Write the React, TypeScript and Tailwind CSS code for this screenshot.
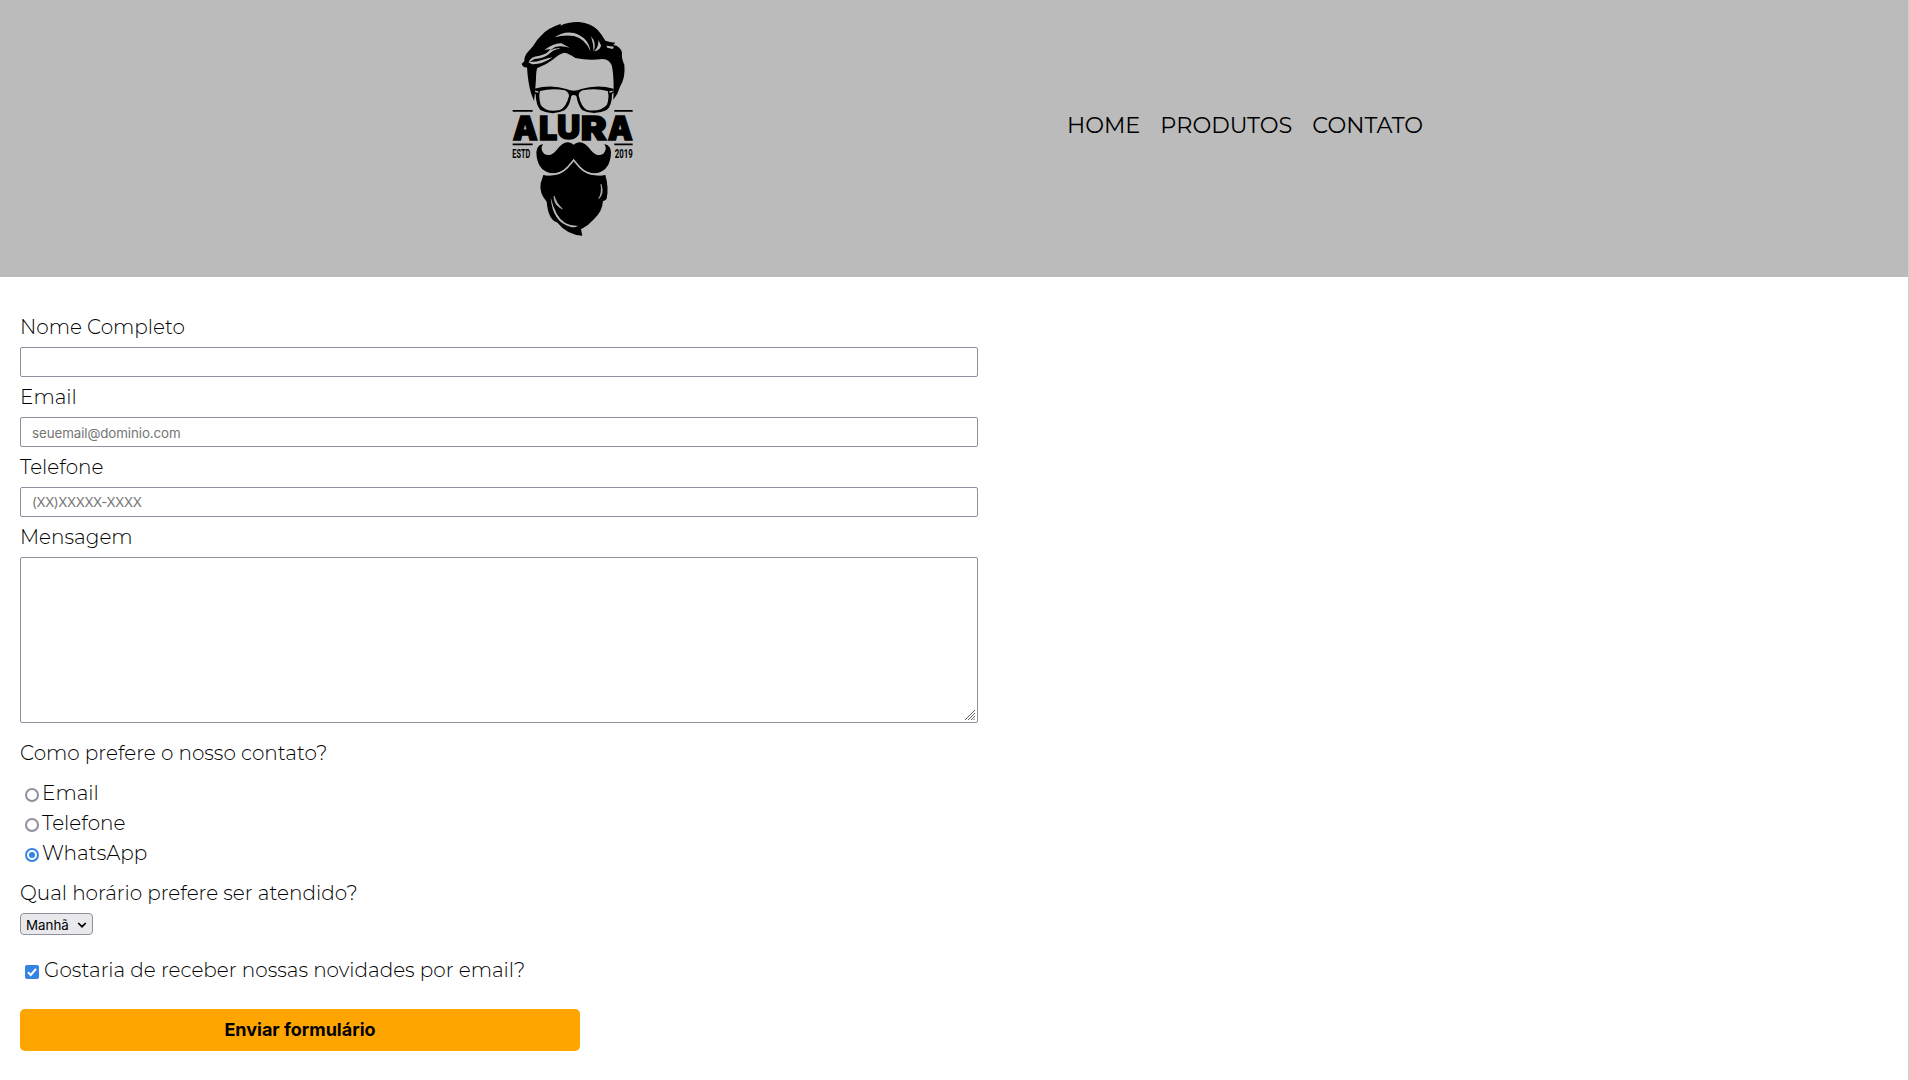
import type { ReactNode } from 'react';

const NAV = ['Home', 'Produtos', 'Contato'];

function Logo() {
  return (
    <svg viewBox="0 0 435 705" className="h-[235px] w-[145px]" role="img" aria-label="Alura">
      {/* hair */}
      <path d="M102 273L94 252Q84 222 81 172Q69 174 65 161L73 154Q72 138 86 123L99 109Q110 88 126 74Q144 54 183 41L181 47Q205 35 237 36Q275 40 294 61Q307 76 316 92Q329 97 346 98L340 105Q361 108 366 128Q364 145 373 164Q377 202 360 230Q354 252 340 269L341 238Q341 190 335 166Q328 148 308 147Q266 153 226 144Q207 130 193 128Q179 130 160 148Q139 165 112 174Q108 183 108 206L105 248Z" />
      <g fill="#bbb">
        <path d="M164 82Q192 62 222 69Q267 83 271 124Q257 87 222 78Q193 73 164 82Z" />
        <path d="M273 79Q291 99 281 125Q281 102 273 79Z" />
        <path d="M295 90Q297 112 282 124Q303 120 303 106Z" />
        <path d="M319 107L342 110L338 117L322 113Z" />
        <path d="M133 120Q163 98 184 100L209 113Q184 105 165 111L149 122Q170 112 182 116Q160 117 147 132Q131 145 103 147L86 158Q90 139 119 137Q143 132 151 117Z" />
        <path d="M85 156Q109 157 128 149Q143 144 158 142Q127 164 96 163Z" />
      </g>
      {/* glasses */}
      <path fillRule="evenodd" d="M102 236Q155 222 199 237Q221 247 244 237Q291 222 341 236L341 248L336 252Q336 288 319 301Q280 318 246 300Q234 286 229 258Q221 252 214 258Q209 289 193 301Q157 319 121 300Q108 286 107 253L102 247ZM120 243Q115 260 122 284Q137 308 180 300Q198 293 207 258Q207 247 194 241Q157 233 120 243ZM248 241Q236 246 236 256Q243 291 261 300Q300 307 321 284Q329 261 323 243Q286 233 248 241Z" />
      <path d="M105 244L115 246M338 244L328 246" stroke="#bbb" strokeWidth="4" />
      {/* rules beside the name */}
      <path d="M38 302.500H98M343 302.500H398M38 403H98M343 403H398" stroke="#000" strokeWidth="5.500" />
      <g className="font-['Inter'] font-black" stroke="#000" strokeWidth="4" fontSize="98">
        <text x="38" y="389" textLength="75" lengthAdjust="spacingAndGlyphs">A</text>
        <text x="117" y="389" textLength="55" lengthAdjust="spacingAndGlyphs">L</text>
        <text x="171" y="388" textLength="70" lengthAdjust="spacingAndGlyphs">U</text>
        <text x="242" y="389" textLength="78" lengthAdjust="spacingAndGlyphs">R</text>
        <text x="323" y="389" textLength="75" lengthAdjust="spacingAndGlyphs">A</text>
      </g>
      <g className="font-['Roboto'] font-bold" fontSize="36">
        <text x="37" y="443" textLength="54" lengthAdjust="spacingAndGlyphs">ESTD</text>
        <text x="344" y="443" textLength="54" lengthAdjust="spacingAndGlyphs">2019</text>
      </g>
      {/* moustache */}
      <path d="M129 402Q105 406 110 440Q117 487 160 490Q203 486 221 446Q239 486 282 490Q325 487 332 440Q337 406 313 402Q323 418 310 431Q293 443 274 422Q253 395 237 397Q226 399 221 404Q216 399 205 397Q189 395 168 422Q149 443 132 431Q119 418 129 402Z" />
      {/* beard */}
      <path d="M130 495Q177 503 204 474L221 454L238 474Q265 503 316 495Q327 532 320 566Q315 573 309 573Q307 604 283 626Q266 646 243 658L247 677Q202 676 171 637Q145 630 140 575Q117 550 122 520Z" />
      <path d="M130 492.500Q177 500 203 471L221 450L239 471Q265 500 316 492.500" fill="none" stroke="#bbb" strokeWidth="4" />
      <path d="M152 562Q158 638 211 650Q224 655 234 647Q192 650 171 613Q158 590 152 562Z" fill="#bbb" />
      <path d="M162 558Q161 585 187 597Q170 582 162 558ZM303 523Q313 551 296 566Q307 550 303 523Z" fill="#bbb" stroke="#bbb" strokeWidth="2" />
    </svg>
  );
}

function Field({ label, children }: { label: string; children: ReactNode }) {
  return (
    <label className="flex flex-col gap-2">
      <span>{label}</span>
      {children}
    </label>
  );
}

const box =
  "block w-[958px] rounded-[2px] border border-[#8f8f9d] bg-white px-[11px] font-['Inter'] text-[13.333px] font-normal placeholder:text-[#757575] placeholder:opacity-100 outline-none";

function Radio({ label, checked }: { label: string; checked?: boolean }) {
  return (
    <label className="flex h-[30px] items-start">
      <span
        className={
          checked
            ? 'mt-[7px] ml-[5px] mr-[3px] flex size-[14px] items-center justify-center rounded-full border-2 border-[#3584e4]'
            : 'mt-[7px] ml-[5px] mr-[3px] flex size-[14px] rounded-full border-2 border-[#8f8f9d]'
        }
      >
        {checked && <span className="size-[6px] rounded-full bg-[#3584e4]" />}
      </span>
      {label}
    </label>
  );
}

export default function App() {
  return (
    <div className="h-[1080px] overflow-hidden border-r border-[#cdcdcd] bg-white font-['Montserrat',sans-serif] text-black">
      <header className="flex h-[277px] bg-[#bbb]">
        <div className="ml-[500px] mt-[10px] w-[567px]">
          <Logo />
        </div>
        <nav className="mt-[112px] flex gap-5 text-[22.4px] leading-[27px] uppercase">
          {NAV.map((n) => (
            <a key={n}>{n}</a>
          ))}
        </nav>
      </header>
      <form className="px-5 pt-[38px] text-[20px] leading-6 font-light">
        <div className="flex flex-col gap-2">
          <Field label="Nome Completo">
            <input className={box + ' h-[30px]'} />
          </Field>
          <Field label="Email">
            <input className={box + ' h-[30px] pt-[2px] tracking-[-0.08px]'} placeholder="seuemail@dominio.com" />
          </Field>
          <Field label="Telefone">
            <input className={box + ' h-[30px] tracking-[-0.4px]'} placeholder="(XX)XXXXX-XXXX" />
          </Field>
          <Field label="Mensagem">
            <span className="relative w-[958px]">
              <textarea className={box + ' h-[166px] resize-none'} />
              <svg className="absolute right-[3px] bottom-[3px] size-[10px]" viewBox="0 0 10 10" stroke="#666" strokeWidth="1">
                <path d="M0 10L10 0M3 10L10 3M6 10L10 6M8.500 10L10 8.500" />
              </svg>
            </span>
          </Field>
        </div>
        <p className="mt-[18px]">Como prefere o nosso contato?</p>
        <div className="mt-4">
          <Radio label="Email" />
          <Radio label="Telefone" />
          <Radio label="WhatsApp" checked />
        </div>
        <p className="mt-[10px]">Qual horário prefere ser atendido?</p>
        <div className="mt-2 flex h-[22px] w-[73px] items-center justify-between rounded-[4px] border border-[#8f8f9d] bg-[#e9e9ed] pt-px pr-[5px] pl-[5px] font-['Inter'] text-[13.333px] leading-5 font-normal">
          Manhã
          <svg className="h-[6px] w-[10px]" viewBox="0 0 10 6" fill="none" stroke="#000" strokeWidth="1.700">
            <path d="M1.200 1L5 4.700L8.800 1" />
          </svg>
        </div>
        <label className="mt-[23px] flex items-start">
          <span className="mt-[7px] mr-[5px] ml-[5px] flex size-[14px] items-center justify-center rounded-[2px] bg-[#3584e4]">
            <svg className="size-[14px]" viewBox="0 0 14 14" fill="none" stroke="#fff" strokeWidth="2">
              <path d="M3 7.200L5.800 10L11 3.800" />
            </svg>
          </span>
          Gostaria de receber nossas novidades por email?
        </label>
        <button
          type="button"
          className="mt-[27px] block h-[42px] w-[560px] rounded-[5px] bg-[#ffa500] font-['Inter'] text-[18px] font-bold"
        >
          Enviar formulário
        </button>
      </form>
    </div>
  );
}
